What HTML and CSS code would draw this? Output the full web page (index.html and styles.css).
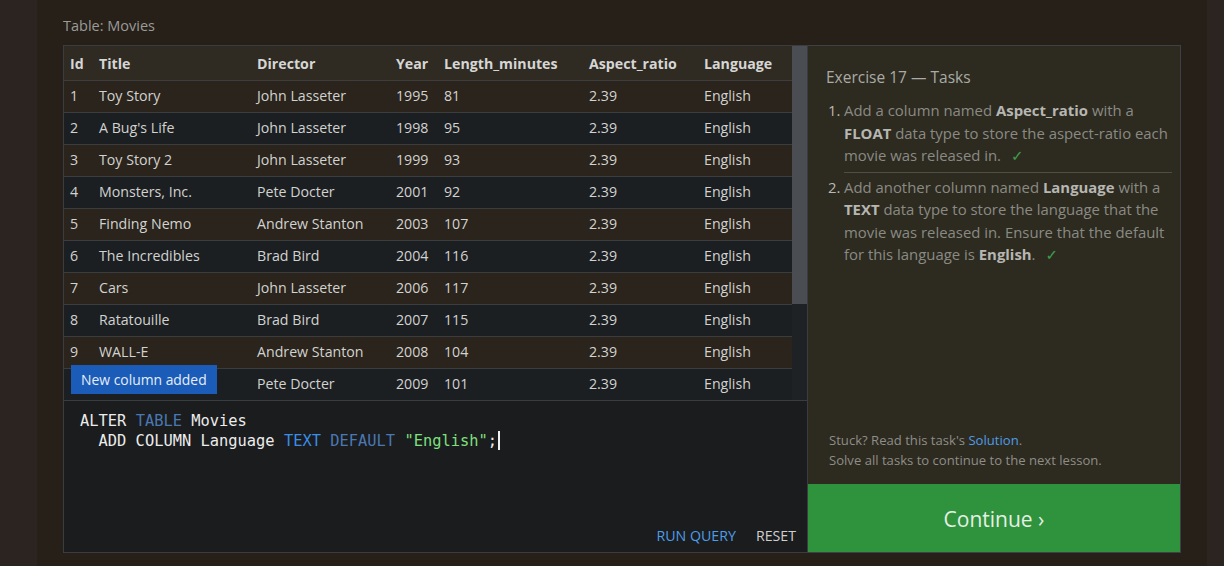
FILE: index.html
```html
<!DOCTYPE html>
<html>
<head>
<meta charset="utf-8">
<link rel="stylesheet" href="styles.css">
</head>
<body>
<div class="main">
  <div class="label">Table: Movies</div>
  <div class="work">
    <div class="left">
      <div class="results">
        <div class="table-wrap">
          <table class="movies">
            <colgroup>
              <col style="width:29px"><col style="width:158px"><col style="width:139px"><col style="width:48px"><col style="width:145px"><col style="width:115px"><col style="width:94px">
            </colgroup>
            <thead>
              <tr><th>Id</th><th>Title</th><th>Director</th><th>Year</th><th>Length_minutes</th><th>Aspect_ratio</th><th>Language</th></tr>
            </thead>
            <tbody>
              <tr><td>1</td><td>Toy Story</td><td>John Lasseter</td><td>1995</td><td>81</td><td>2.39</td><td>English</td></tr>
              <tr><td>2</td><td>A Bug's Life</td><td>John Lasseter</td><td>1998</td><td>95</td><td>2.39</td><td>English</td></tr>
              <tr><td>3</td><td>Toy Story 2</td><td>John Lasseter</td><td>1999</td><td>93</td><td>2.39</td><td>English</td></tr>
              <tr><td>4</td><td>Monsters, Inc.</td><td>Pete Docter</td><td>2001</td><td>92</td><td>2.39</td><td>English</td></tr>
              <tr><td>5</td><td>Finding Nemo</td><td>Andrew Stanton</td><td>2003</td><td>107</td><td>2.39</td><td>English</td></tr>
              <tr><td>6</td><td>The Incredibles</td><td>Brad Bird</td><td>2004</td><td>116</td><td>2.39</td><td>English</td></tr>
              <tr><td>7</td><td>Cars</td><td>John Lasseter</td><td>2006</td><td>117</td><td>2.39</td><td>English</td></tr>
              <tr><td>8</td><td>Ratatouille</td><td>Brad Bird</td><td>2007</td><td>115</td><td>2.39</td><td>English</td></tr>
              <tr><td>9</td><td>WALL-E</td><td>Andrew Stanton</td><td>2008</td><td>104</td><td>2.39</td><td>English</td></tr>
              <tr><td>10</td><td>Up</td><td>Pete Docter</td><td>2009</td><td>101</td><td>2.39</td><td>English</td></tr>
              <tr><td>11</td><td>Toy Story 3</td><td>Lee Unkrich</td><td>2010</td><td>103</td><td>2.39</td><td>English</td></tr>
              <tr><td>12</td><td>Cars 2</td><td>John Lasseter</td><td>2011</td><td>120</td><td>2.39</td><td>English</td></tr>
              <tr><td>13</td><td>Brave</td><td>Brenda Chapman</td><td>2012</td><td>102</td><td>2.39</td><td>English</td></tr>
            </tbody>
          </table>
          <div class="tooltip">New column added</div>
        </div>
        <div class="scrollbar"><div class="thumb"></div></div>
      </div>
      <div class="editor">
        <div class="code">
          <div class="line"><span class="w">ALTER</span> <span class="kw">TABLE</span> <span class="w">Movies</span></div>
          <div class="line">  <span class="w">ADD COLUMN Language</span> <span class="ty">TEXT</span> <span class="kw">DEFAULT</span> <span class="str">"English"</span><span class="w">;</span><span class="cursor"></span></div>
        </div>
        <div class="actions">
          <span class="run">RUN QUERY</span>
          <span class="reset">RESET</span>
        </div>
      </div>
    </div>
    <div class="panel">
      <div class="tasks">
        <div class="ex-title">Exercise 17 — Tasks</div>
        <ol class="task-list">
          <li class="task first"><span class="num">1.</span><span class="txt">Add a column named <b>Aspect_ratio</b> with a <b>FLOAT</b> data type to store the aspect-ratio each movie was released in. <span class="check">✓</span></span></li>
          <li class="task"><span class="num">2.</span><span class="txt">Add another column named <b>Language</b> with a <b>TEXT</b> data type to store the language that the movie was released in. Ensure that the default for this language is <b>English</b>. <span class="check">✓</span></span></li>
        </ol>
        <div class="stuck">
          <div>Stuck? Read this task's <span class="link">Solution</span>.</div>
          <div>Solve all tasks to continue to the next lesson.</div>
        </div>
      </div>
      <div class="continue">Continue ›</div>
    </div>
  </div>
</div>
</body>
</html>
```

FILE: styles.css
```css
* { box-sizing: border-box; }
html, body { margin: 0; padding: 0; }
body {
  background: #2b2421;
  font-family: "Open Sans", "Noto Sans", sans-serif;
  width: 1224px;
  height: 566px;
  overflow: hidden;
}
.main {
  margin-left: 37px;
  width: 1170px;
  height: 566px;
  background: #262019;
  padding: 15px 26px 0 26px;
}
.label {
  color: #9b9b98;
  font-size: 14.5px;
  line-height: 22px;
  height: 20px;
  margin-bottom: 10px;
}
.work {
  display: flex;
  height: 508px;
}
.left {
  width: 745px;
  border: 1px solid #3a3d40;
  display: flex;
  flex-direction: column;
}
.results {
  display: flex;
  height: 354px;
  flex: none;
}
.table-wrap {
  position: relative;
  width: 728px;
  height: 354px;
  overflow: hidden;
}
.movies {
  table-layout: fixed;
  width: 728px;
  border-collapse: collapse;
  color: #d2d2d0;
  font-size: 14.2px;
}
.movies th {
  background: #2f2b23;
  height: 34px;
  text-align: left;
  font-weight: 700;
  color: #d6d6d4;
  padding: 2px 0 0 6px;
  border-bottom: 1px solid #3c3d3c;
  white-space: nowrap;
}
.movies td {
  height: 32px;
  padding: 0 0 2px 6px;
  border-bottom: 1px solid #3a3c3d;
  white-space: nowrap;
}
.movies tbody tr:nth-child(odd) td { background: #2a241c; }
.movies tbody tr:nth-child(even) td { background: #1c1f22; }
.tooltip {
  position: absolute;
  left: 7px;
  top: 319px;
  height: 29px;
  line-height: 29px;
  padding: 0 10px;
  background: #1a5cb8;
  color: #e6edf7;
  font-size: 13.9px;
}
.scrollbar {
  width: 15px;
  height: 354px;
  background: #1f2224;
}
.thumb {
  height: 258px;
  background: #4a4e52;
}
.editor {
  flex: 1;
  background: #1b1c1e;
  border-top: 1px solid #3a3d40;
  display: flex;
  flex-direction: column;
  justify-content: space-between;
}
.code {
  padding: 10px 0 0 16px;
  font-family: "DejaVu Sans Mono", "Liberation Mono", monospace;
  font-size: 15.4px;
  line-height: 20px;
  color: #e8e8e8;
}
.line { white-space: pre; }
.code .w { color: #ececec; }
.code .kw { color: #4a78b2; }
.code .ty { color: #3a8ee8; }
.code .str { color: #7ee07e; }
.cursor {
  display: inline-block;
  width: 2px;
  height: 19px;
  background: #f0f0f0;
  vertical-align: -4px;
  margin-left: 1px;
}
.actions {
  display: flex;
  justify-content: flex-end;
  gap: 20px;
  padding: 0 11px 6px 0;
  font-size: 14.2px;
  line-height: 20px;
}
.run { color: #4d9de8; }
.reset { color: #cfcfcf; }
.panel {
  width: 373px;
  border: 1px solid #3d4146;
  border-left: none;
  display: flex;
  flex-direction: column;
  background: #2d2a20;
}
.tasks {
  flex: 1;
  display: flex;
  flex-direction: column;
  padding: 20px 8px 0 18px;
}
.ex-title {
  color: #aaaaa6;
  font-size: 15.5px;
  line-height: 22px;
  margin-bottom: 11px;
}
.task-list {
  list-style: none;
  margin: 0;
  padding: 0;
}
.task {
  display: flex;
  font-size: 14.9px;
  line-height: 22.5px;
  color: #8a8a84;
}
.task .num {
  width: 18px;
  flex: none;
  color: #b8b8b4;
  padding-left: 2px;
}
.task .txt { flex: 1; }
.task.first .txt {
  border-bottom: 1px solid #4f4e46;
  padding-bottom: 4px;
  margin-bottom: 3px;
}
.task b { color: #b6b6b2; font-weight: 700; }
.check {
  color: #3e9a4a;
  font-family: "DejaVu Sans", sans-serif;
  margin-left: 6px;
}
.stuck {
  margin-top: auto;
  padding: 0 0 14px 3px;
  color: #8e8e88;
  font-size: 13.1px;
  line-height: 20px;
}
.link { color: #4d9de8; }
.continue {
  height: 68px;
  background: #2e933c;
  color: #e6efe6;
  font-size: 21px;
  display: flex;
  align-items: center;
  justify-content: center;
  padding-top: 2px;
}
```
